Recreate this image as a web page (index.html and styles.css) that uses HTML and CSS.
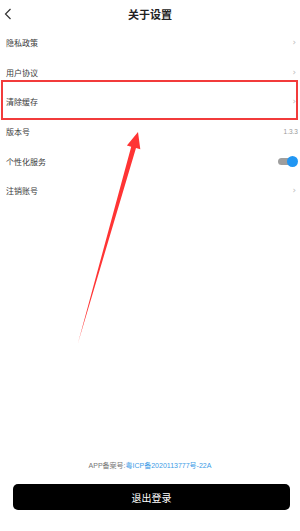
FILE: index.html
```html
<!DOCTYPE html>
<html lang="zh">
<head>
<meta charset="utf-8">
<link rel="stylesheet" href="styles.css">
</head>
<body>
<div class="page">
  <header class="header">
    <svg class="back" width="8" height="12" viewBox="0 0 8 12"><path d="M6.5 1 L1.5 6 L6.5 11" fill="none" stroke="#333" stroke-width="1.2"/></svg>
    <div class="title">关于设置</div>
  </header>
  <ul class="list">
    <li class="row"><span class="label">隐私政策</span><span class="chev">›</span></li>
    <li class="row"><span class="label">用户协议</span><span class="chev">›</span></li>
    <li class="row"><span class="label">清除缓存</span><span class="chev">›</span></li>
    <li class="row"><span class="label">版本号</span><span class="ver">1.3.3</span></li>
    <li class="row"><span class="label">个性化服务</span><span class="toggle"><span class="knob"></span></span></li>
    <li class="row"><span class="label">注销账号</span><span class="chev">›</span></li>
  </ul>
  <div class="spacer"></div>
  <p class="icp">APP备案号:<span class="link">粤ICP备2020113777号-22A</span></p>
  <button class="logout">退出登录</button>
</div>
<div class="highlight"></div>
<svg class="arrow" width="300" height="531" viewBox="0 0 300 531">
  <polygon points="78,343 131.2,146.7 126.9,145.5 138,132 140.3,149.3 136,148.1" fill="#ff3434"/>
</svg>
</body>
</html>
```
FILE: styles.css
```css
* { box-sizing: border-box; }
html, body { margin: 0; padding: 0; background: #fff; }
body {
  font-family: "Noto Sans CJK SC", "Noto Sans", sans-serif;
  width: 300px; height: 531px; overflow: hidden; position: relative;
}
.page { display: flex; flex-direction: column; height: 531px; }
.header {
  height: 28px; display: flex; align-items: center; justify-content: center; position: relative;
}
.back { position: absolute; left: 4px; top: 8px; }
.title { font-size: 11px; font-weight: 700; color: #222; margin-top: -1px; }
.list { list-style: none; margin: 0; padding: 0; }
.row {
  height: 29.6px; display: flex; align-items: center; justify-content: space-between;
  padding: 0 4px 0 6px;
}
.label { font-size: 8px; color: #3a3a3a; }
.chev { font-size: 9px; color: #bbb; font-family: "DejaVu Sans", sans-serif; line-height: 1; }
.ver { font-size: 6.5px; color: #999; font-family: "Liberation Sans", sans-serif; margin-right: -2px; }
.toggle {
  width: 20px; height: 11px; position: relative; margin-right: -2px;
}
.toggle::before {
  content: ""; position: absolute; left: 0; top: 2px; width: 15px; height: 7px; border-radius: 4px; background: #9e9e9e;
}
.knob {
  position: absolute; right: 0; top: 0; width: 11px; height: 11px; border-radius: 50%; background: #2196f3;
}
.spacer { flex: 1; }
.icp {
  margin: 0 0 14px; text-align: center; font-size: 7px; color: #777;
  font-family: "Liberation Sans", "Noto Sans CJK SC", sans-serif;
}
.link { color: #3c9be6; }
.logout {
  margin: 0 10px 21px 13px; height: 26px; border: none; border-radius: 5px;
  background: #000; color: #fff; font-size: 10px;
  font-family: "Noto Sans CJK SC", sans-serif;
}
.highlight {
  position: absolute; left: 1px; top: 80px; width: 297px; height: 40px;
  border: 2px solid #f23b3b;
}
.arrow { position: absolute; left: 0; top: 0; pointer-events: none; }
```
